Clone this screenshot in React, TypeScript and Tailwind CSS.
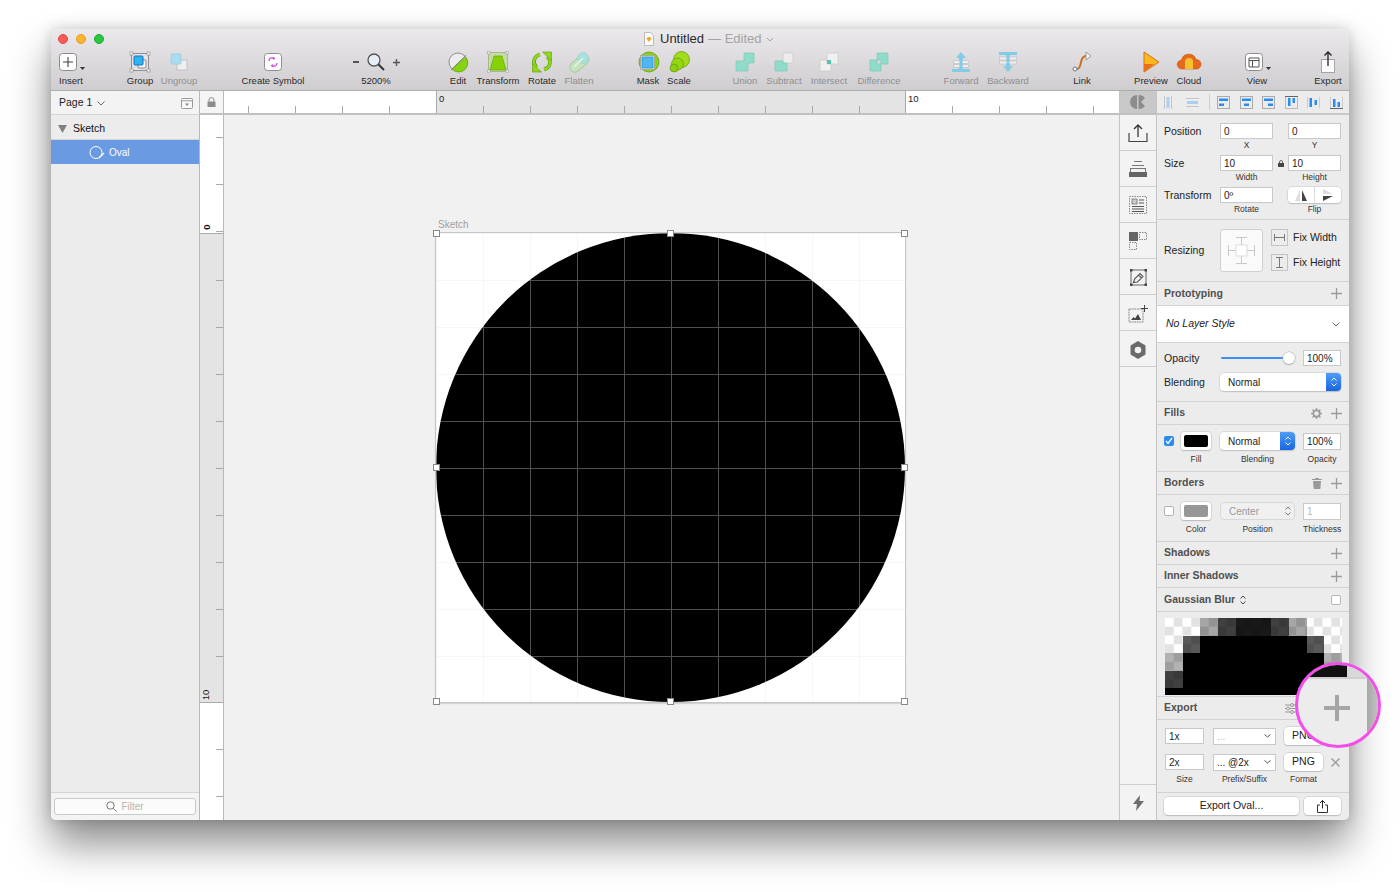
import React from "react";

const FONT = "font-['Liberation_Sans',Arial,sans-serif]";

const Sq = ({ children, w = 26, h = 24 }: { children: React.ReactNode; w?: number; h?: number }) => (
  <svg width={w} height={h} viewBox={`0 0 ${w} ${h}`} fill="none">{children}</svg>
);

const IInsert = () => (
  <Sq w={30}>
    <rect x="2.5" y="3.5" width="17" height="17" rx="3" fill="#fdfdfd" stroke="#8c8c8c" />
    <path d="M11 7v10M6 12h10" stroke="#444" strokeWidth="1.1" />
    <path d="M23 17h5l-2.5 3z" fill="#333" />
  </Sq>
);
const IGroup = () => (
  <Sq>
    <rect x="4.5" y="3.5" width="17" height="17" fill="#e4e2e4" stroke="#8f8f8f" />
    <rect x="11" y="10" width="8" height="8" rx="1" fill="#f6f6f6" stroke="#888" />
    <rect x="7" y="6" width="9" height="9" rx="1" fill="#2eb5ee" stroke="#1673c8" />
    {[[3, 2], [20, 2], [3, 19], [20, 19]].map(([x, y]) => <rect key={x * 10 + y} x={x} y={y} width="3" height="3" fill="#f4f4f4" stroke="#888" strokeWidth=".6" />)}
  </Sq>
);
const IUngroup = () => (
  <Sq>
    <rect x="11" y="10" width="10" height="10" fill="#efefef" stroke="#c4c4c4" />
    <rect x="5" y="4" width="10" height="10" rx="1" fill="#a9dcf0" stroke="#a0cfe2" />
  </Sq>
);
const ISymbol = () => (
  <Sq>
    <rect x="4.5" y="3.5" width="17" height="17" rx="3" fill="#fdfdfd" stroke="#8f8f8f" />
    <path d="M9 11c0-3 3-4 5-2.5M17 13c0 3-3 4-5 2.5" stroke="#d13ee0" strokeWidth="1.2" />
    <path d="M13 6.8l2.4 1.4-2 1.7zM13 17.2l-2.4-1.4 2-1.7z" fill="#d13ee0" />
  </Sq>
);
const IZoom = () => (
  <div className="flex items-center gap-[7px] h-[24px]">
    <span className="block w-[6px] h-[1.5px] bg-[#555]" />
    <svg width="20" height="20" viewBox="0 0 20 20" fill="none">
      <circle cx="8" cy="8" r="6" fill="#e8eef6" stroke="#555" strokeWidth="1.3" />
      <path d="M12.5 12.5l5.5 5.5" stroke="#333" strokeWidth="2" />
    </svg>
    <svg width="7" height="7" viewBox="0 0 7 7"><path d="M3.5 0v7M0 3.5h7" stroke="#555" strokeWidth="1.4" /></svg>
  </div>
);
const IEdit = () => (
  <Sq>
    <circle cx="13" cy="12" r="9" fill="#ededed" stroke="#8f8f8f" />
    <path d="M20.500 7A9 9 0 0 1 7 19z" fill="#86d312" stroke="#5c9c0a" strokeWidth=".7" />
    <path d="M6 20L21 5" stroke="#777" strokeWidth=".8" />
  </Sq>
);
const ITransform = () => (
  <Sq>
    <rect x="3.500" y="2.500" width="19" height="19" fill="#c7dba5" stroke="#a6b98a" />
    <path d="M9 6h8l4 14H5z" fill="#86d108" stroke="#5e9a08" strokeWidth=".6" />
    {[[2.500, 1.500], [21, 1.500], [2.500, 20], [21, 20]].map(([x, y]) => <rect key={x * 10 + y} x={x} y={y} width="2.500" height="2.500" fill="#eee" stroke="#999" strokeWidth=".5" />)}
  </Sq>
);
const IRotate = () => (
  <Sq>
    <path d="M11 4.500C5 6 3 12.500 7.500 17.500" stroke="#5e9a08" strokeWidth="3.600" />
    <path d="M11 4.500C5 6 3 12.500 7.500 17.500" stroke="#8fd81a" strokeWidth="2.400" />
    <path d="M3.500 13.500l9 8.500H3.500z" fill="#8fd81a" stroke="#5e9a08" strokeWidth=".6" />
    <path d="M15 19.500C21 18 23 11.500 18.500 6.500" stroke="#5e9a08" strokeWidth="3.600" />
    <path d="M15 19.500C21 18 23 11.500 18.500 6.500" stroke="#8fd81a" strokeWidth="2.400" />
    <path d="M22.500 10.500L13.500 2h9z" fill="#8fd81a" stroke="#5e9a08" strokeWidth=".6" />
  </Sq>
);
const IFlatten = () => (
  <Sq>
    <rect x="2" y="8.500" width="22" height="10" rx="5" transform="rotate(-40 13 13)" fill="#c4e2bc" stroke="#a8c9a8" />
    <circle cx="17" cy="8" r="5.500" fill="#a8e0dc" stroke="#9cc" strokeWidth=".6" />
    <path d="M8 17l9-9" stroke="#e8f4e8" strokeWidth="1.500" />
  </Sq>
);
const IMask = () => (
  <Sq>
    <circle cx="14" cy="12" r="10" fill="#86d312" stroke="#5e9a08" strokeWidth=".7" />
    <rect x="5.500" y="5.500" width="14" height="14" fill="#d8d8d8" stroke="#9a9a9a" strokeWidth=".6" />
    <rect x="7" y="7" width="11" height="11" fill="#4fb6f0" stroke="#2a8cd0" strokeWidth=".6" />
  </Sq>
);
const IScale = () => (
  <Sq>
    <circle cx="15.500" cy="9.500" r="8" fill="#a2dc1c" stroke="#5e9a08" strokeWidth=".7" />
    <circle cx="11.500" cy="14" r="6" fill="#96d612" stroke="#5e9a08" strokeWidth=".7" />
    <circle cx="8" cy="18" r="4" fill="#8ccf0c" stroke="#5e9a08" strokeWidth=".7" />
  </Sq>
);
const T = "#8fdccb";
const IUnion = () => (
  <Sq><path d="M12 3h10v10h-6v8H4V11h8z" fill={T} stroke="#7fc8b8" strokeWidth=".7" /></Sq>
);
const ISubtract = () => (
  <Sq>
    <rect x="12" y="3" width="10" height="10" fill="#ececec" stroke="#c8c8c8" strokeWidth=".7" />
    <path d="M4 11h8v2h4v8H4z" fill={T} stroke="#7fc8b8" strokeWidth=".7" />
  </Sq>
);
const IIntersect = () => (
  <Sq>
    <rect x="4" y="10" width="11" height="11" fill="#f0f0f0" stroke="#c8c8c8" strokeWidth=".7" />
    <rect x="11" y="3" width="11" height="11" fill="#f0f0f0" stroke="#c8c8c8" strokeWidth=".7" />
    <rect x="11" y="10" width="4" height="4" fill="#54c4ad" />
  </Sq>
);
const IDifference = () => (
  <Sq>
    <path d="M11 3h11v11h-7v-4h-4z" fill={T} stroke="#7fc8b8" strokeWidth=".7" />
    <path d="M4 10h7v4h4v7H4z" fill={T} stroke="#7fc8b8" strokeWidth=".7" />
  </Sq>
);
const IForward = () => (
  <Sq>
    <path d="M13 2l5 6h-3v11h7v3H4v-3h7V8H8z" fill="#84cbe8" />
    <rect x="5.500" y="10.500" width="15" height="3" fill="#eeeeee" stroke="#bdbdbd" strokeWidth=".6" />
    <rect x="5.500" y="14.500" width="15" height="3" fill="#eeeeee" stroke="#bdbdbd" strokeWidth=".6" />
    <rect x="11.500" y="8" width="3" height="11" fill="#84cbe8" />
  </Sq>
);
const IBackward = () => (
  <Sq>
    <path d="M4 2h18v3h-7v11h3l-5 6-5-6h3V5H4z" fill="#84cbe8" />
    <rect x="4.500" y="7" width="17" height="3" fill="#eeeeee" stroke="#bdbdbd" strokeWidth=".6" />
    <rect x="4.500" y="11" width="17" height="3" fill="#eeeeee" stroke="#bdbdbd" strokeWidth=".6" />
    <rect x="11.500" y="5" width="3" height="11" fill="#84cbe8" />
  </Sq>
);
const ILink = () => (
  <Sq>
    <path d="M8 19c4 0 3-6 5-10 1-2 2-3 4-3" stroke="#c8701e" strokeWidth="2" />
    <circle cx="6" cy="19" r="2" fill="#f5f5f5" stroke="#777" />
    <path d="M17 2l5 4-5 4z" fill="#f5f5f5" stroke="#999" />
  </Sq>
);
const IPreview = () => (
  <Sq>
    <path d="M6 2l15 10L6 22z" fill="#fbb81e" stroke="#d8701a" />
    <path d="M6 14h10L6 22z" fill="#e8701a" />
  </Sq>
);
const ICloud = () => (
  <Sq>
    <path d="M6 19a4.500 4.500 0 0 1-.5-9A7.500 7.500 0 0 1 20 9.500 4.500 4.500 0 0 1 20.500 19z" fill="#e8681c" stroke="#c8501a" strokeWidth=".6" />
    <path d="M9 19v-7a4 4 0 0 1 8 0v7z" fill="#f8c22e" />
  </Sq>
);
const IView = () => (
  <Sq w={30}>
    <rect x="2.500" y="3.500" width="17" height="17" rx="3" fill="#fdfdfd" stroke="#8c8c8c" />
    <path d="M6 8h10v9H6zM6 10.500h10M9.500 10.500V17" stroke="#555" />
    <path d="M23 17h5l-2.500 3z" fill="#333" />
  </Sq>
);
const IExport = () => (
  <Sq>
    <rect x="6.500" y="9.500" width="13" height="13" fill="#fbfbfb" stroke="#a5a5a5" />
    <path d="M13 16V2M9.500 5.500L13 2l3.500 3.500" stroke="#222" strokeWidth="1.300" />
  </Sq>
);

type Tool = { label: string; cls: string; icon: React.ReactNode; dim?: boolean };
const tools: Tool[] = [
  { label: "Insert", cls: "w-[40px] ml-0", icon: <IInsert /> },
  { label: "Group", cls: "w-[36px] ml-[31px]", icon: <IGroup /> },
  { label: "Ungroup", cls: "w-[42px] ml-0", icon: <IUngroup />, dim: true },
  { label: "Create Symbol", cls: "w-[80px] ml-[33px]", icon: <ISymbol /> },
  { label: "5200%", cls: "w-[60px] ml-[33px]", icon: <IZoom /> },
  { label: "Edit", cls: "w-[36px] ml-[34px]", icon: <IEdit /> },
  { label: "Transform", cls: "w-[44px] ml-0", icon: <ITransform /> },
  { label: "Rotate", cls: "w-[44px] ml-0", icon: <IRotate /> },
  { label: "Flatten", cls: "w-[30px] ml-0", icon: <IFlatten />, dim: true },
  { label: "Mask", cls: "w-[36px] ml-[36px]", icon: <IMask /> },
  { label: "Scale", cls: "w-[26px] ml-0", icon: <IScale /> },
  { label: "Union", cls: "w-[40px] ml-[33px]", icon: <IUnion />, dim: true },
  { label: "Subtract", cls: "w-[38px] ml-0", icon: <ISubtract />, dim: true },
  { label: "Intersect", cls: "w-[52px] ml-0", icon: <IIntersect />, dim: true },
  { label: "Difference", cls: "w-[48px] ml-0", icon: <IDifference />, dim: true },
  { label: "Forward", cls: "w-[42px] ml-[37px]", icon: <IForward />, dim: true },
  { label: "Backward", cls: "w-[52px] ml-0", icon: <IBackward />, dim: true },
  { label: "Link", cls: "w-[36px] ml-[30px]", icon: <ILink /> },
  { label: "Preview", cls: "w-[42px] ml-[30px]", icon: <IPreview /> },
  { label: "Cloud", cls: "w-[34px] ml-0", icon: <ICloud /> },
  { label: "View", cls: "w-[40px] ml-[31px]", icon: <IView /> },
  { label: "Export", cls: "w-[40px] ml-[31px]", icon: <IExport /> },
];

const Toolbar = () => (
  <div className="h-[62px] shrink-0 rounded-t-[5px] bg-gradient-to-b from-[#ebe9eb] to-[#cfcdcf] border-b border-[#aeaeae] flex flex-col">
    <div className="h-[20px] flex items-center relative">
      <div className="flex gap-[8px] pl-[7px]">
        <span className="block w-[10px] h-[10px] rounded-full bg-[#fc5b57] border border-[#e3473f]" />
        <span className="block w-[10px] h-[10px] rounded-full bg-[#fdb52f] border border-[#e09e1e]" />
        <span className="block w-[10px] h-[10px] rounded-full bg-[#27c840] border border-[#1aab2c]" />
      </div>
      <div className="flex items-center ml-[540px]">
        <svg width="10" height="14" viewBox="0 0 10 14" className="mr-[6px]">
          <path d="M.5.500h6l3 3v10H.5z" fill="#fafafa" stroke="#bbb" />
          <path d="M5 10L2.500 6.500 4 5h2l1.500 1.500z" fill="#f6a51c" />
        </svg>
        <span className="text-[13px] text-[#2a2a2a]">Untitled</span>
        <span className="text-[13px] text-[#a4a4a4] ml-[4px]">— Edited</span>
        <svg width="8" height="5" viewBox="0 0 8 5" className="ml-[4px]"><path d="M1 1l3 3 3-3" stroke="#a4a4a4" fill="none" /></svg>
      </div>
    </div>
    <div className="flex pt-[1px]">
      {tools.map((t) => (
        <div key={t.label} className={`flex flex-col items-center shrink-0 ${t.cls}`}>
          <div className={`h-[24px] flex items-center justify-center ${t.label === "Insert" || t.label === "View" ? "pl-[1px]" : ""}`}>{t.icon}</div>
          <span className={`text-[9.5px] leading-[13px] whitespace-nowrap ${t.dim ? "text-[#8f8f8f]" : "text-[#2a2a2a]"}`}>{t.label}</span>
        </div>
      ))}
    </div>
  </div>
);

const Sidebar = () => (
  <div className="w-[148px] shrink-0 flex flex-col bg-[#ececec]">
    <div className="h-[24px] bg-[#f3f3f3] border-b border-[#d4d4d4] flex items-center pl-[8px] pr-[6px] pt-[1px] text-[10.5px] text-[#222]">
      <span>Page 1</span>
      <svg width="8" height="5" viewBox="0 0 8 5" className="ml-[5px]"><path d="M.5.500L4 4 7.500.500" stroke="#666" fill="none" /></svg>
      <svg width="12" height="11" viewBox="0 0 12 11" className="ml-auto"><rect x=".5" y=".5" width="11" height="10" rx="1" fill="#f8f8f8" stroke="#999" /><path d="M.5 2.800h11" stroke="#999" /><path d="M4 5.500h4L6 8z" fill="#888" /></svg>
    </div>
    <div className="h-[25px] border-b border-[#d4d4d4] flex items-center pl-[7px] pt-[3px] text-[10.5px] text-[#111]">
      <svg width="9" height="8" viewBox="0 0 9 8" className="mr-[6px]"><path d="M0 0h9L4.500 8z" fill="#808080" /></svg>
      <span>Sketch</span>
    </div>
    <div className="h-[24px] bg-[#6a9ae2] flex items-center pl-[37px] text-[10px] text-white">
      <svg width="18" height="15" viewBox="0 0 18 15" fill="none" className="mr-[3px]">
        <circle cx="8" cy="7.500" r="6" stroke="#fff" />
        <path d="M11 13l5-5" stroke="#fff" strokeWidth="1.200" />
      </svg>
      <span>Oval</span>
    </div>
    <div className="flex-1" />
    <div className="h-[28px] bg-[#f3f3f3] border-t border-[#d4d4d4] px-[3px] pt-[5px]">
      <div className="h-[17px] rounded-[3px] bg-[#fbfbfb] border border-[#c9c9c9] flex items-center justify-center gap-[4px] text-[10px] text-[#b4b4b4]">
        <svg width="11" height="11" viewBox="0 0 11 11" fill="none"><circle cx="4.500" cy="4.500" r="3.700" stroke="#777" /><path d="M7.500 7.500l3 3" stroke="#777" /></svg>
        <span>Filter</span>
      </div>
    </div>
  </div>
);

const tickH = "bg-[linear-gradient(to_right,#a8a8a8_1px,transparent_1px)] bg-[size:47px_7px] bg-repeat-x";
const tickV = "bg-[linear-gradient(to_bottom,#a8a8a8_1px,transparent_1px)] bg-[size:7px_47px] bg-repeat-y";

const Handle = ({ cls }: { cls: string }) => (
  <span className={`absolute w-[7px] h-[7px] bg-white border border-[#888] ${cls}`} />
);

const Canvas = () => (
  <div className="flex flex-col flex-1 min-w-0">
    <div className="h-[24px] flex shrink-0 border-b-[2px] border-[#c0c0c0] bg-white">
      <div className="w-[25px] bg-[#f5f5f5] border-l border-r border-[#b8b8b8] flex items-center justify-center">
        <svg width="9" height="10" viewBox="0 0 9 10"><path d="M2 4.500V3a2.500 2.500 0 0 1 5 0v1.500" stroke="#8c8c8c" fill="none" /><rect x=".5" y="4.500" width="8" height="5.500" fill="#8c8c8c" /></svg>
      </div>
      <div className={`w-[212px] bg-white ${tickH} bg-[position:24px_100%]`} />
      <div className={`w-[469px] bg-[#e4e4e4] border-l border-[#aaa] ${tickH} bg-[position:46px_100%] text-[9.5px] text-[#222] pl-[2px] leading-[16px]`}>0</div>
      <div className={`flex-1 bg-white border-l border-[#aaa] ${tickH} bg-[position:46px_100%] text-[9.5px] text-[#222] pl-[2px] leading-[16px]`}>10</div>
    </div>
    <div className="flex flex-1 min-h-0">
      <div className="w-[25px] shrink-0 flex flex-col bg-white border-l border-r border-[#b8b8b8]">
        <div className={`h-[118px] relative ${tickV} bg-[position:100%_22px]`}>
          <span className="absolute left-[4px] bottom-[0px] -rotate-90 text-[9.5px] font-bold leading-[12px] text-[#111]">0</span>
        </div>
        <div className={`h-[469px] bg-[#e4e4e4] border-t border-[#aaa] relative ${tickV} bg-[position:100%_46px]`}>
          <span className="absolute left-[1px] bottom-[1px] -rotate-90 text-[9.5px] leading-[12px] text-[#111]">10</span>
        </div>
        <div className={`flex-1 border-t border-[#aaa] ${tickV} bg-[position:100%_46px]`} />
      </div>
      <div className="flex-1 bg-[#f1f1f1] relative overflow-hidden">
        <span className="absolute left-[214px] top-[103px] text-[10px] leading-[13px] text-[#a0a0a0]">Sketch</span>
        <div className="absolute left-[212px] top-[118px] w-[469px] h-[469px] bg-white shadow-[0_0_0_1px_#c6c6c6,0_1px_1px_1px_#d4d4d4] bg-[linear-gradient(to_right,#f6f6f6_1px,transparent_1px),linear-gradient(to_bottom,#f6f6f6_1px,transparent_1px)] bg-[size:47px_47px]">
          <div className="w-full h-full rounded-full bg-black bg-[linear-gradient(to_right,#505050_1px,transparent_1px),linear-gradient(to_bottom,#505050_1px,transparent_1px)] bg-[size:47px_47px]" />
          <Handle cls="-left-[3px] -top-[3px]" />
          <Handle cls="left-[231px] -top-[3px]" />
          <Handle cls="-right-[3px] -top-[3px]" />
          <Handle cls="-left-[3px] top-[231px]" />
          <Handle cls="-right-[3px] top-[231px]" />
          <Handle cls="-left-[3px] -bottom-[3px]" />
          <Handle cls="left-[231px] -bottom-[3px]" />
          <Handle cls="-right-[3px] -bottom-[3px]" />
        </div>
      </div>
    </div>
  </div>
);

const StripBtn = ({ children, cls = "" }: { children: React.ReactNode; cls?: string }) => (
  <div className={`h-[36px] shrink-0 border-b border-[#cfcfcf] flex items-center justify-center ${cls}`}>{children}</div>
);

const Strip = () => (
  <div className="w-[38px] shrink-0 flex flex-col bg-[#f3f3f3] border-l border-r border-[#c4c4c4]">
    <div className="h-[24px] shrink-0 bg-[#c8c8c8] border-b-[2px] border-[#c0c0c0] flex items-center justify-center">
      <svg width="16" height="14" viewBox="0 0 16 14"><path d="M7 0a7 7 0 0 0 0 14z" fill="#8c8c8c" /><path d="M8.500 0c3 0 5 1 6.500 3l-4 4 4 4c-1.500 2-3.500 3-6.500 3z" fill="#8c8c8c" /></svg>
    </div>
    <StripBtn>
      <svg width="20" height="20" viewBox="0 0 20 20" fill="none"><path d="M1 10v8.500h18V10" stroke="#444" strokeWidth="1.200" /><path d="M10 14V2M6 6l4-4 4 4" stroke="#333" strokeWidth="1.300" /></svg>
    </StripBtn>
    <StripBtn>
      <svg width="20" height="18" viewBox="0 0 20 18" fill="none"><path d="M6 1.500h8M4 5.500h12" stroke="#777" /><rect x="2.500" y="8.500" width="15" height="4" stroke="#777" /><rect x="1" y="12" width="18" height="5" fill="#666" /></svg>
    </StripBtn>
    <StripBtn>
      <svg width="18" height="18" viewBox="0 0 18 18" fill="none"><rect x=".5" y=".5" width="17" height="17" stroke="#888" strokeDasharray="1.500 1" /><rect x="3" y="3" width="5" height="5" fill="#ccc" stroke="#666" strokeWidth=".7" /><path d="M10 4h5M10 7h5M3 10.500h12M3 13h12M3 15.500h12" stroke="#555" /></svg>
    </StripBtn>
    <StripBtn>
      <svg width="18" height="18" viewBox="0 0 18 18" fill="none"><rect width="9" height="9" fill="#666" /><rect x="10.500" y=".5" width="7" height="7" stroke="#888" strokeDasharray="1.500 1" /><rect x=".5" y="10.500" width="7" height="7" stroke="#888" strokeDasharray="1.500 1" /></svg>
    </StripBtn>
    <StripBtn cls="pt-[2px]">
      <svg width="19" height="19" viewBox="0 0 19 19" fill="none"><rect x="2" y="2" width="15" height="15" stroke="#666" /><rect x="1" y="1" width="2.500" height="2.500" fill="#444" /><rect x="15.500" y="1" width="2.500" height="2.500" fill="#444" /><rect x="1" y="15.500" width="2.500" height="2.500" fill="#444" /><rect x="15.500" y="15.500" width="2.500" height="2.500" fill="#444" /><path d="M4.500 14.500l1-3.500 5.500-5.500 3 3-5.500 5.500zM9.500 7l3 3" stroke="#555" strokeWidth="1.100" /></svg>
    </StripBtn>
    <StripBtn cls="pt-[2px]">
      <svg width="20" height="18" viewBox="0 0 20 18" fill="none"><rect x="1" y="4" width="14" height="13" stroke="#8c8c8c" strokeDasharray="2 .6" /><path d="M3 15l2.500-3 1.500 1.500L10 9l3 6z" fill="#444" /><path d="M16.500 0v7M13 3.500h7" stroke="#444" /></svg>
    </StripBtn>
    <StripBtn cls="pt-[2px]">
      <svg width="16" height="18" viewBox="0 0 16 18"><path d="M8 0l7.500 4.500v9L8 18 .5 13.500v-9z" fill="#6b6b6b" /><circle cx="8" cy="9" r="3.300" fill="#f3f3f3" /></svg>
    </StripBtn>
    <div className="flex-1" />
    <div className="h-[36px] shrink-0 border-t border-[#cfcfcf] flex items-center justify-center">
      <svg width="11" height="16" viewBox="0 0 11 16"><path d="M7 0L0 9h4l-1 7 8-10H6.500z" fill="#6e6e6e" /></svg>
    </div>
  </div>
);

const Field = ({ v, w = "w-[53px]", dim, h = "h-[16px]" }: { v: string; w?: string; dim?: boolean; h?: string }) => (
  <div className={`${w} ${h} shrink-0 bg-white border border-[#c8c8c8] pl-[3px] flex items-center text-[10px] ${dim ? "text-[#bbb]" : "text-[#222]"}`}>{v}</div>
);
const Cap = ({ t, w = "w-[53px]" }: { t: string; w?: string }) => (
  <div className={`${w} shrink-0 text-center text-[8.500px] leading-[12px] text-[#333] whitespace-nowrap`}>{t}</div>
);
const Lbl = ({ t }: { t: string }) => (
  <div className="w-[56px] shrink-0 text-[10.500px] text-[#222] leading-[16px] whitespace-nowrap">{t}</div>
);
const Plus = () => (
  <svg width="11" height="11" viewBox="0 0 11 11"><path d="M5.500 0v11M0 5.500h11" stroke="#9a9a9a" strokeWidth="1.300" /></svg>
);
const Head = ({ t, cls = "h-[23px]", children }: { t: string; cls?: string; children?: React.ReactNode }) => (
  <div className={`${cls} shrink-0 border-b border-[#d2d2d2] flex items-center pl-[7px] pr-[7px] text-[10.500px] font-bold text-[#505050]`}>
    <span>{t}</span>
    <div className="ml-auto flex items-center gap-[9px]">{children}</div>
  </div>
);
const Stepper = () => (
  <svg width="6" height="10" viewBox="0 0 6 10" fill="none"><path d="M.5 3.500L3 1l2.500 2.500M.5 6.500L3 9l2.500-2.500" stroke="currentColor" /></svg>
);
const Select = ({ w, v }: { w: string; v: string }) => (
  <div className={`${w} h-[18px] shrink-0 rounded-[4px] bg-white shadow-[0_0_0_0.5px_#c8c8c8,0_1px_1px_#bbb] flex items-center pl-[8px] text-[10px] text-[#222]`}>
    <span>{v}</span>
    <div className="ml-auto w-[15px] h-full rounded-r-[4px] bg-gradient-to-b from-[#4f9cf9] to-[#1666e0] text-white flex items-center justify-center"><Stepper /></div>
  </div>
);

const A = ({ children }: { children: React.ReactNode }) => (
  <svg width="13" height="13" viewBox="0 0 13 13" className="shrink-0">{children}</svg>
);
const B = "#2a8cf0";
const aligns = [
  <A key="a"><rect x=".5" y=".5" width="12" height="12" fill="none" stroke="#aaa" /><path d="M2 2.500h9v2.500H2zM2 7.500h5v2.500H2z" fill={B} /></A>,
  <A key="b"><rect x=".5" y=".5" width="12" height="12" fill="none" stroke="#aaa" /><path d="M2 2.500h9v2.500H2zM4 7.500h5v2.500H4z" fill={B} /></A>,
  <A key="c"><rect x=".5" y=".5" width="12" height="12" fill="none" stroke="#aaa" /><path d="M2 2.500h9v2.500H2zM6 7.500h5v2.500H6z" fill={B} /></A>,
  <A key="d"><rect x=".5" y=".5" width="12" height="12" fill="none" stroke="#bbb" /><path d="M0 .5h13" stroke="#666" /><path d="M3 2h2.500v8H3zM7.500 2H10v5H7.500z" fill={B} /></A>,
  <A key="e"><path d="M2.500 2H5v9H2.500zM7.500 4H10v5H7.500z" fill={B} /><path d="M.5 1v11M12.500 1v11" stroke="#ccc" /></A>,
  <A key="f"><path d="M.5 1v11M12.500 1v11" stroke="#ccc" /><path d="M0 12.500h13" stroke="#666" /><path d="M3 3h2.500v8H3zM7.500 6H10v5H7.500z" fill={B} /></A>,
];

const pix = [
  "", "", "bg-black/35", "bg-black/75", "bg-black/90", "bg-black/90", "bg-black/75", "bg-black/35", "", "",
  "", "bg-black/65", "bg-black", "bg-black", "bg-black", "bg-black", "bg-black", "bg-black", "bg-black/65", "",
  "bg-black/30", "bg-black", "bg-black", "bg-black", "bg-black", "bg-black", "bg-black", "bg-black", "bg-black", "bg-black/30",
  "bg-black/75", "bg-black", "bg-black", "bg-black", "bg-black", "bg-black", "bg-black", "bg-black", "bg-black", "bg-black",
  "bg-black", "bg-black", "bg-black", "bg-black", "bg-black", "bg-black", "bg-black", "bg-black", "bg-black", "bg-black",
];

const Inspector = () => (
  <div className="w-[192px] shrink-0 flex flex-col bg-[#ececec]">
    <div className="h-[24px] shrink-0 flex items-center border-b-[2px] border-[#c8c8c8] pl-[7px]">
      <svg width="8" height="13" viewBox="0 0 8 13" className="mr-[14px]"><path d="M.5 0v13M7.500 0v13" stroke="#c4c4c4" /><rect x="2.500" y="1" width="3" height="11" fill="#a9cff2" /></svg>
      <svg width="13" height="9" viewBox="0 0 13 9" className="mr-[10px]"><path d="M0 .5h13M0 8.500h13" stroke="#c4c4c4" /><rect x="1" y="3" width="11" height="3" fill="#a9cff2" /></svg>
      <span className="w-px h-[16px] bg-[#d0d0d0] mr-[7px]" />
      <div className="flex gap-[9.500px]">{aligns}</div>
    </div>

    <div className="h-[105px] shrink-0 border-b border-[#d2d2d2] pt-[8px] pl-[7px]">
      <div className="h-[32px]">
        <div className="flex"><Lbl t="Position" /><Field v="0" /><div className="w-[15px]" /><Field v="0" /></div>
        <div className="flex pl-[56px]"><Cap t="X" /><div className="w-[15px]" /><Cap t="Y" /></div>
      </div>
      <div className="h-[32px]">
        <div className="flex">
          <Lbl t="Size" /><Field v="10" />
          <div className="w-[15px] flex items-center justify-center">
            <svg width="6" height="7" viewBox="0 0 6 7"><path d="M1.500 3V2a1.500 1.500 0 0 1 3 0v1" stroke="#444" fill="none" strokeWidth=".8" /><rect y="3" width="6" height="4" fill="#444" /></svg>
          </div>
          <Field v="10" />
        </div>
        <div className="flex pl-[56px]"><Cap t="Width" /><div className="w-[15px]" /><Cap t="Height" /></div>
      </div>
      <div className="h-[32px]">
        <div className="flex">
          <Lbl t="Transform" /><Field v="0º" /><div className="w-[15px]" />
          <div className="w-[53px] h-[16px] rounded-[4px] bg-white shadow-[0_0_0_0.5px_#c8c8c8,0_1px_1px_#bbb] flex">
            <div className="flex-1 border-r border-[#ddd] flex items-center justify-center">
              <svg width="14" height="11" viewBox="0 0 14 11"><path d="M6 0v11H1z" fill="#ddd" /><path d="M8 0v11h5z" fill="#444" /></svg>
            </div>
            <div className="flex-1 flex items-center justify-center">
              <svg width="12" height="12" viewBox="0 0 12 12"><path d="M1 0v5h10z" fill="#ddd" /><path d="M1 12V7h10z" fill="#444" /></svg>
            </div>
          </div>
        </div>
        <div className="flex pl-[56px]"><Cap t="Rotate" /><div className="w-[15px]" /><Cap t="Flip" /></div>
      </div>
    </div>

    <div className="h-[62px] shrink-0 border-b border-[#d2d2d2] pl-[7px] pt-[9px] flex">
      <div className="w-[56px] h-[43px] flex items-center text-[10.500px] text-[#222]">Resizing</div>
      <div className="w-[43px] h-[43px] rounded-[3px] bg-[#fafafa] border border-[#d0d0d0] flex items-center justify-center">
        <svg width="35" height="35" viewBox="0 0 35 35" fill="none" stroke="#c8c8c8">
          <path d="M12 4.500h11M17.500 4.500v8M12 30.500h11M17.500 22.500v8M4.500 12v11M4.500 17.500h8M30.500 12v11M22.500 17.500h8" />
          <rect x="12" y="12" width="11" height="11" fill="#fff" stroke="#ddd" />
        </svg>
      </div>
      <div className="ml-[8px] flex flex-col gap-[8px]">
        <div className="flex items-center h-[17px] text-[10.500px] text-[#222]">
          <div className="w-[17px] h-[17px] border border-[#c4c4c4] flex items-center justify-center mr-[5px]">
            <svg width="11" height="7" viewBox="0 0 11 7"><path d="M.5 0v7M10.500 0v7M.5 3.500h10" stroke="#777" /></svg>
          </div>
          Fix Width
        </div>
        <div className="flex items-center h-[17px] text-[10.500px] text-[#222]">
          <div className="w-[17px] h-[17px] border border-[#c4c4c4] flex items-center justify-center mr-[5px]">
            <svg width="7" height="11" viewBox="0 0 7 11"><path d="M0 .5h7M0 10.500h7M3.500 .5v10" stroke="#777" /></svg>
          </div>
          Fix Height
        </div>
      </div>
    </div>

    <Head t="Prototyping" cls="h-[24px]"><Plus /></Head>

    <div className="h-[37px] shrink-0 bg-white border-b border-[#d2d2d2] flex items-center pl-[9px] pr-[9px] text-[10.500px] italic text-[#222]">
      <span>No Layer Style</span>
      <svg width="8" height="5" viewBox="0 0 8 5" className="ml-auto"><path d="M.5.500L4 4 7.500.500" stroke="#666" fill="none" /></svg>
    </div>

    <div className="h-[59px] shrink-0 border-b border-[#d2d2d2] pl-[7px] pt-[7px]">
      <div className="flex h-[16px] items-center">
        <Lbl t="Opacity" />
        <div className="w-[68px] h-[2px] bg-[#3d8df5] rounded-full ml-[1px] relative">
          <span className="absolute -right-[6px] -top-[5px] w-[12px] h-[12px] rounded-full bg-white shadow-[0_0_0_0.5px_#aaa,0_1px_1px_#aaa]" />
        </div>
        <div className="ml-[14px]"><Field v="100%" w="w-[38px]" /></div>
      </div>
      <div className="flex h-[18px] items-center mt-[7px]">
        <Lbl t="Blending" />
        <Select w="w-[121px]" v="Normal" />
      </div>
    </div>

    <Head t="Fills">
      <svg width="11" height="11" viewBox="0 0 11 11"><circle cx="5.500" cy="5.500" r="3.200" fill="none" stroke="#9a9a9a" strokeWidth="1.800" /><path d="M5.500 0v2M5.500 9v2M0 5.500h2M9 5.500h2M1.600 1.600L3 3M8 8l1.400 1.400M9.400 1.600L8 3M3 8L1.600 9.400" stroke="#9a9a9a" strokeWidth="1.400" /></svg>
      <Plus />
    </Head>

    <div className="h-[47px] shrink-0 border-b border-[#d2d2d2] pl-[7px] pt-[7px]">
      <div className="flex items-center h-[18px]">
        <div className="w-[10px] h-[10px] rounded-[2px] bg-[#2a8cf0] flex items-center justify-center mr-[7px]">
          <svg width="8" height="8" viewBox="0 0 8 8" fill="none"><path d="M1 4l2 2.500L7 1" stroke="#fff" strokeWidth="1.300" /></svg>
        </div>
        <div className="w-[30px] h-[18px] rounded-[3px] bg-white shadow-[0_0_0_0.5px_#c0c0c0,0_1px_1px_#bbb] p-[3px]"><div className="w-full h-full rounded-[2px] bg-black" /></div>
        <div className="ml-[9px]"><Select w="w-[75px]" v="Normal" /></div>
        <div className="ml-[8px]"><Field v="100%" w="w-[38px]" h="h-[17px]" /></div>
      </div>
      <div className="flex mt-[3px] pl-[17px]">
        <Cap t="Fill" w="w-[30px]" />
        <div className="ml-[9px]"><Cap t="Blending" w="w-[75px]" /></div>
        <div className="ml-[8px]"><Cap t="Opacity" w="w-[38px]" /></div>
      </div>
    </div>

    <Head t="Borders">
      <svg width="10" height="11" viewBox="0 0 10 11"><path d="M0 1.500h10M3.500 1.500V.5h3v1" stroke="#9a9a9a" /><path d="M1 3h8l-.7 8H1.700z" fill="#9a9a9a" /></svg>
      <Plus />
    </Head>

    <div className="h-[47px] shrink-0 border-b border-[#d2d2d2] pl-[7px] pt-[7px]">
      <div className="flex items-center h-[18px]">
        <div className="w-[10px] h-[10px] rounded-[2px] bg-white border border-[#b4b4b4] mr-[7px]" />
        <div className="w-[30px] h-[18px] rounded-[3px] bg-white shadow-[0_0_0_0.5px_#c0c0c0,0_1px_1px_#bbb] p-[3px]"><div className="w-full h-full rounded-[2px] bg-[#979797]" /></div>
        <div className="ml-[9px] w-[75px] h-[18px] rounded-[4px] bg-[#f0f0f0] border border-[#d8d8d8] flex items-center pl-[8px] pr-[3px] text-[10px] text-[#999]">
          <span>Center</span><span className="ml-auto text-[#777]"><Stepper /></span>
        </div>
        <div className="ml-[8px]"><Field v="1" w="w-[38px]" h="h-[17px]" dim /></div>
      </div>
      <div className="flex mt-[3px] pl-[17px]">
        <Cap t="Color" w="w-[30px]" />
        <div className="ml-[9px]"><Cap t="Position" w="w-[75px]" /></div>
        <div className="ml-[8px]"><Cap t="Thickness" w="w-[38px]" /></div>
      </div>
    </div>

    <Head t="Shadows"><Plus /></Head>
    <Head t="Inner Shadows"><Plus /></Head>
    <div className="h-[24px] shrink-0 border-b border-[#d2d2d2] flex items-center pl-[7px] pr-[7px] text-[10.500px] font-bold text-[#505050]">
      <span className="mr-[5px]">Gaussian Blur</span>
      <span className="text-[#444]"><Stepper /></span>
      <div className="ml-auto w-[10px] h-[10px] rounded-[2px] bg-white border border-[#b4b4b4] mr-[1px]" />
    </div>

    <div className="h-[84px] shrink-0 pt-[6px] pl-[8px] overflow-hidden">
      <div className="w-[177px] h-[77px] grid grid-cols-10 auto-rows-[17.500px] overflow-hidden bg-[conic-gradient(#e2e2e2_25%,#fff_0_50%,#e2e2e2_0_75%,#fff_0)] bg-[size:17.500px_17.500px]">
        {pix.map((c, i) => <div key={i} className={c} />)}
      </div>
    </div>

    <div className="h-[24px] shrink-0 border-t border-b border-[#d2d2d2] flex items-center pl-[7px] text-[10.500px] font-bold text-[#505050]">
      <span>Export</span>
      <svg width="11" height="11" viewBox="0 0 11 11" className="ml-[88px]"><path d="M0 2h11M0 5.500h11M0 9h11" stroke="#999" /><circle cx="7" cy="2" r="1.500" fill="#ececec" stroke="#999" /><circle cx="3" cy="5.500" r="1.500" fill="#ececec" stroke="#999" /><circle cx="7" cy="9" r="1.500" fill="#ececec" stroke="#999" /></svg>
    </div>

    <div className="h-[73px] shrink-0 border-b border-[#d2d2d2] pl-[8px] pt-[7px]">
      {[["1x", "...", false], ["2x", "... @2x", true]].map(([a, b, x], i) => (
        <div key={i} className={`flex items-center h-[18px] ${i ? "mt-[8px]" : ""}`}>
          <Field v={a as string} w="w-[39px]" />
          <div className="ml-[9px] w-[63px] h-[17px] bg-white border border-[#c8c8c8] flex items-center pl-[3px] pr-[4px] text-[10px]">
            <span className={i ? "text-[#222]" : "text-[#bbb]"}>{b as string}</span>
            <svg width="7" height="4" viewBox="0 0 7 4" className="ml-auto"><path d="M.5.500L3.500 3l3-2.500" stroke="#555" fill="none" /></svg>
          </div>
          <div className="ml-[8px] w-[39px] h-[18px] rounded-[4px] bg-white shadow-[0_0_0_0.5px_#c0c0c0,0_1px_1px_#bbb] flex items-center justify-center text-[10.500px] text-[#222]">PNG</div>
          {x ? (
            <svg width="9" height="9" viewBox="0 0 9 9" className="ml-[8px]"><path d="M.5.500l8 8M8.500.5l-8 8" stroke="#999" strokeWidth="1.300" /></svg>
          ) : null}
        </div>
      ))}
      <div className="flex mt-[2px]">
        <Cap t="Size" w="w-[39px]" />
        <div className="ml-[9px]"><Cap t="Prefix/Suffix" w="w-[63px]" /></div>
        <div className="ml-[8px]"><Cap t="Format" w="w-[39px]" /></div>
      </div>
    </div>

    <div className="flex-1 pl-[7px] pt-[4px] flex">
      <div className="w-[135px] h-[18px] rounded-[4px] bg-white shadow-[0_0_0_0.5px_#c0c0c0,0_1px_1px_#bbb] flex items-center justify-center text-[10.500px] text-[#222]">Export Oval...</div>
      <div className="ml-[5px] w-[37px] h-[18px] rounded-[4px] bg-white shadow-[0_0_0_0.5px_#c0c0c0,0_1px_1px_#bbb] flex items-center justify-center">
        <svg width="11" height="13" viewBox="0 0 11 13" fill="none"><path d="M3 5H.5v7.500h10V5H8" stroke="#333" /><path d="M5.500 8.500V.5M3 3l2.500-2.500L8 3" stroke="#222" /></svg>
      </div>
    </div>
  </div>
);

const Lens = () => (
  <div className="absolute left-[1295px] top-[662px] w-[86px] h-[86px] rounded-full overflow-hidden border-[3px] border-[#f44ee8] bg-[#ececec]">
    <div className="absolute left-0 top-0 w-[49px] h-[12px] bg-[#111]" />
    <div className="absolute left-0 top-[12px] w-[69px] h-[2px] bg-[#cfcfcf]" />
    <div className="absolute left-[69px] top-[12px] w-[14px] h-[74px] bg-gradient-to-r from-[#a8a8a8] to-[#c8c8c8]" />
    <div className="absolute left-[49px] top-0 w-[34px] h-[12px] bg-[#d8d8d8]" />
    <svg width="28" height="28" viewBox="0 0 28 28" className="absolute left-[25px] top-[29px] blur-[0.6px]"><path d="M14 1v26M1 14h26" stroke="#a6a6a6" strokeWidth="4" /></svg>
  </div>
);

export default function App() {
  return (
    <div className={`relative w-[1400px] h-[892px] overflow-hidden bg-white pt-[29px] pl-[51px] ${FONT}`}>
      <div className="w-[1298px] h-[791px] rounded-[5px] flex flex-col bg-[#ececec] shadow-[0_24px_42px_rgba(0,0,0,0.45),0_0_14px_rgba(0,0,0,0.18)] overflow-hidden">
        <Toolbar />
        <div className="flex flex-1 min-h-0">
          <Sidebar />
          <Canvas />
          <Strip />
          <Inspector />
        </div>
      </div>
      <Lens />
    </div>
  );
}
